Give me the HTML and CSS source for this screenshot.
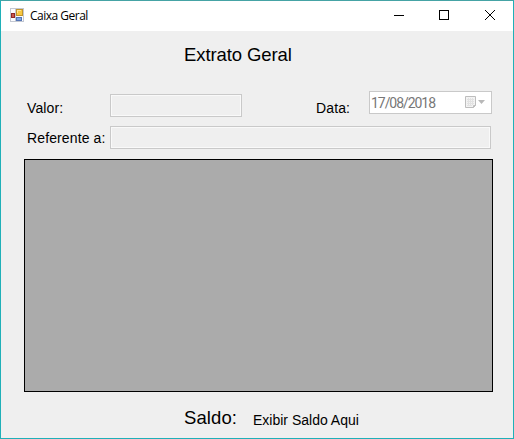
FILE: index.html
```html
<!DOCTYPE html>
<html lang="pt-BR">
<head>
<meta charset="utf-8">
<title>Caixa Geral</title>
<link rel="stylesheet" href="styles.css">
</head>
<body>
<div class="window">
  <header class="titlebar">
    <svg class="app-icon" width="14" height="14" viewBox="0 0 14 14">
      <rect x="0.5" y="0.5" width="13" height="13" fill="#fbfcff" stroke="#c3c8d2"/>
      <path d="M5.5 1v13M1 9.5h5" stroke="#c3c8d2" fill="none"/>
      <rect x="6.5" y="1.5" width="6" height="6" fill="#f8c842" stroke="#c1952c"/>
      <path d="M7 2.5h4M7.5 3v2" stroke="#ffe596"/>
      <rect x="1.5" y="5.5" width="3" height="4" fill="#c9574c" stroke="#8d2828"/>
      <rect x="6.5" y="9.5" width="5" height="3" fill="#7fa8e2" stroke="#5575b5"/>
    </svg>
    <span class="caption">Caixa Geral</span>
    <div class="controls">
      <svg width="46" height="29" viewBox="0 0 46 29"><path d="M19 14.5h10" stroke="#000"/></svg>
      <svg width="46" height="29" viewBox="0 0 46 29"><rect x="18.5" y="9.5" width="9" height="9" fill="none" stroke="#000"/></svg>
      <svg width="46" height="29" viewBox="0 0 46 29"><path d="M18 9l10 10M28 9l-10 10" stroke="#000"/></svg>
    </div>
  </header>
  <main class="form">
    <h1 class="heading">Extrato Geral</h1>
    <div class="row row-top">
      <label class="label label-value">Valor:</label>
      <div class="field field-value"></div>
      <label class="label label-date">Data:</label>
      <div class="date">
        <span class="date-text">17/08/2018</span>
        <svg width="21" height="13" viewBox="0 0 21 13">
          <path d="M0.5 0.5h10v9l-2 2h-8z" fill="#f3f3f3" stroke="#bdbdbd"/>
          <path d="M2 3.5h7M2 5.5h7M2 7.5h7M2 9.5h5M3.5 2v8M5.5 2v8M7.5 2v7" stroke="#e2e2e2" fill="none"/>
          <path d="M10.5 9.5h-2v2" fill="none" stroke="#bdbdbd"/>
          <path d="M13 4h7l-3.5 4z" fill="#b8b8b8"/>
        </svg>
      </div>
    </div>
    <div class="row row-ref">
      <label class="label label-ref">Referente a:</label>
      <div class="field field-ref"></div>
    </div>
    <div class="grid"></div>
    <footer class="balance">
      <span class="balance-label">Saldo:</span>
      <span class="balance-value">Exibir Saldo Aqui</span>
    </footer>
  </main>
</div>
</body>
</html>
```
FILE: styles.css
```css
* { box-sizing: border-box; }
body { margin: 0; font-family: "Liberation Sans", Arial, sans-serif; color: #000; }
svg { display: block; flex: none; }
.window {
  width: 514px;
  height: 439px;
  display: flex;
  flex-direction: column;
  border: 1px solid #1fb0b8;
  border-top-color: #45a3a5;
  background: #efefef;
}
.titlebar {
  height: 30px;
  display: flex;
  align-items: flex-start;
  background: #fff;
  padding-left: 9px;
}
.app-icon { margin-top: 7px; }
.caption {
  margin: 6px 0 0 6px;
  font: 12px/18px "Open Sans", "Noto Sans", sans-serif;
  letter-spacing: -0.5px;
}
.controls { display: flex; margin-left: auto; }
.form { flex: 1; display: flex; flex-direction: column; padding: 13px 20px 0 23px; }
.heading {
  margin: 0 0 0 160px;
  font-size: 18.5px;
  font-weight: 400;
  line-height: 22px;
  letter-spacing: -0.1px;
  height: 47px;
  white-space: nowrap;
}
.row { display: flex; }
.row-top { height: 35px; }
.row-ref { height: 33px; }
.label { font-size: 14px; line-height: 18px; letter-spacing: 0.12px; padding-left: 3px; white-space: nowrap; }
.label-value, .label-ref { width: 86px; }
.label-value { padding-top: 8px; }
.label-ref { padding-top: 3px; }
.label-date { width: 127px; padding: 8px 0 0 74px; }
.field { height: 23px; border: 1px solid #c9c9c9; box-shadow: inset 0 0 0 1px #f9f9f9; }
.field-value { width: 132px; margin-top: 3px; }
.field-ref { width: 381px; }
.date {
  display: flex;
  width: 123px;
  height: 23px;
  border: 1px solid #c9c9c9;
  background: #fff;
  padding: 4px 5px 0 1px;
  justify-content: space-between;
}
.date-text { font: 14px/14px Roboto, sans-serif; color: #777; letter-spacing: -1.05px; }
.grid { height: 233px; width: 469px; border: 1px solid #000; background: #ababab; }
.balance { display: flex; align-items: baseline; padding: 14px 0 0 160px; white-space: nowrap; }
.balance-label { width: 69px; font-size: 18.5px; line-height: 24px; letter-spacing: 0.1px; }
.balance-value { font-size: 14px; line-height: 18px; position: relative; top: 1px; }
```
